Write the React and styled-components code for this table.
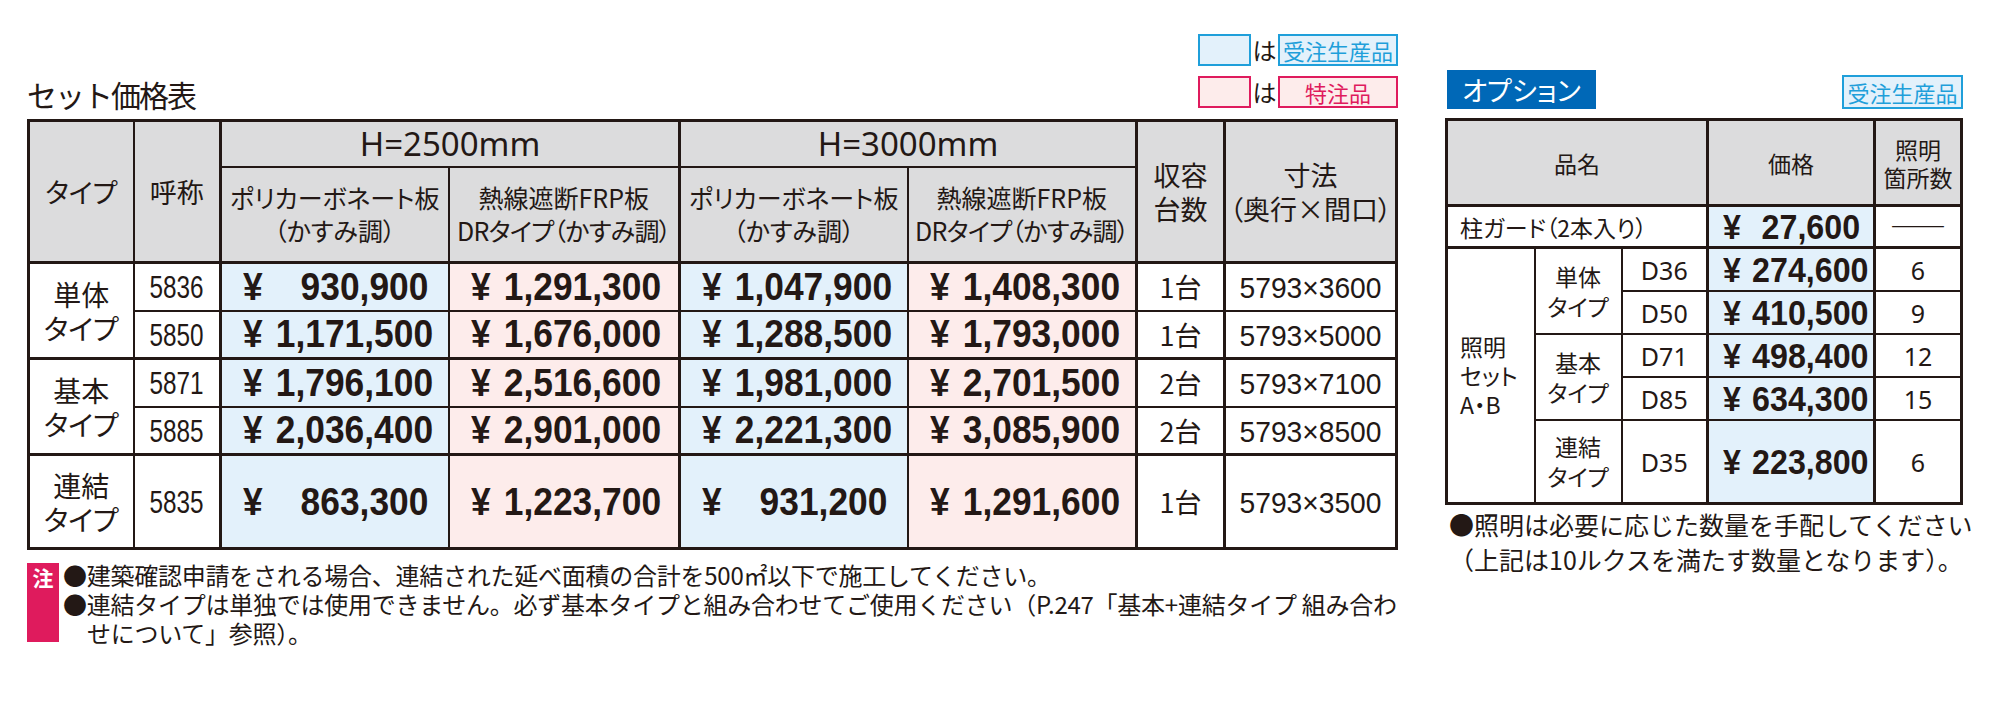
import React from 'react';
import styled, { createGlobalStyle } from 'styled-components';

const INK = '#231815';
const GRAY = '#dcdcdd';
const BLUE_BG = '#e3f1fb';
const PINK_BG = '#fdeceb';
const CYAN = '#1f9fda';
const CRIMSON = '#df1b5d';
const JP = `"Noto Sans CJK JP", "Noto Sans", sans-serif`;
const LATIN = `"Noto Sans", "Noto Sans CJK JP", sans-serif`;
const HELV = `"Liberation Sans", Arial, sans-serif`;

const toneBg = (t) => (t === 'blue' ? BLUE_BG : t === 'pink' ? PINK_BG : '#fff');
const toneInk = (t) => (t === 'blue' ? CYAN : CRIMSON);

const GlobalStyle = createGlobalStyle`
  html, body { margin: 0; padding: 0; background: #fff; }
  body { font-family: ${JP}; color: ${INK}; }
`;

const Page = styled.div`
  display: flex;
  align-items: flex-start;
  gap: 47px;
  padding-left: 27px;
  width: 1998px;
  height: 701px;
  box-sizing: border-box;
  background: #fff;
  overflow: hidden;
`;

const MainColumn = styled.section`
  width: 1371px;
  flex-shrink: 0;
  padding-top: 34px;
  display: flex;
  flex-direction: column;
`;

const TopBar = styled.div`
  display: flex;
  justify-content: space-between;
  align-items: flex-end;
  margin-bottom: 11px;
`;

const Title = styled.h2`
  margin: 0 0 -3px 0;
  font-family: ${JP};
  font-weight: 400;
  font-size: 30px;
  line-height: 34px;
  letter-spacing: -2px;
`;

const Legend = styled.div`
  display: flex;
  flex-direction: column;
  gap: 10px;
`;

const LegendRow = styled.div`
  display: flex;
  align-items: center;
  height: 32px;
`;

const Swatch = styled.span`
  width: 53px;
  height: 32px;
  box-sizing: border-box;
  border: 2.5px solid ${(p) => toneInk(p.$tone)};
  background: ${(p) => toneBg(p.$tone)};
`;

const Ha = styled.span`
  width: 27px;
  text-align: center;
  font-family: ${JP};
  font-size: 24px;
  line-height: 32px;
`;

const Tag = styled.span`
  width: ${(p) => p.$w}px;
  height: ${(p) => p.$h}px;
  box-sizing: border-box;
  border: 2.5px solid ${(p) => toneInk(p.$tone)};
  background: ${(p) => toneBg(p.$tone)};
  color: ${(p) => toneInk(p.$tone)};
  display: flex;
  align-items: center;
  justify-content: center;
  font-family: ${JP};
  font-size: 22px;
  line-height: 1;
`;

const Table = styled.table`
  border-collapse: collapse;
  table-layout: fixed;
  width: ${(p) => p.$w}px;
  border: 3px solid ${INK};
`;

const Row = styled.tr`
  height: ${(p) => p.$h}px;
`;

const Cell = styled.td`
  border: 2px solid ${INK};
  border-right-width: ${(p) => (p.$thickR ? 3 : 2)}px;
  border-bottom-width: ${(p) => (p.$thickB ? 3 : 2)}px;
  background: ${(p) => (p.$head ? GRAY : toneBg(p.$tone))};
  padding: ${(p) => (p.$align === 'left' ? '0 0 0 12px' : '0')};
  text-align: ${(p) => p.$align || 'center'};
  vertical-align: middle;
  font-family: ${JP};
  font-weight: 400;
  font-size: ${(p) => p.$size || 26}px;
  line-height: ${(p) => p.$lh || 33}px;
  font-feature-settings: ${(p) => (p.$palt === false ? 'normal' : '"palt"')};
  white-space: nowrap;
`;

const Tight = styled.span`
  letter-spacing: ${(p) => p.$ls}px;
`;

const LatinText = styled.span`
  font-family: ${LATIN};
  font-size: ${(p) => p.$size}px;
  font-weight: 400;
`;

const Condensed = styled.span`
  display: inline-block;
  font-family: ${HELV};
  font-size: ${(p) => p.$size}px;
  font-weight: ${(p) => (p.$bold ? 700 : 400)};
  transform: scaleX(${(p) => p.$sx});
  transform-origin: ${(p) => p.$origin || 'center'} center;
  line-height: 1;
`;

const PriceBox = styled.div`
  display: flex;
  justify-content: space-between;
  align-items: center;
  padding: 0 ${(p) => p.$pr}px 0 ${(p) => p.$pl}px;
`;

const DashText = styled.span`
  font-family: ${JP};
  font-size: 28px;
  font-weight: 700;
  color: ${INK};
  letter-spacing: 0;
`;

const Notes = styled.div`
  display: flex;
  gap: 4px;
  margin-top: 13px;
`;

const NoteBadge = styled.div`
  width: 32px;
  height: 79px;
  flex-shrink: 0;
  box-sizing: border-box;
  padding-top: 4px;
  background: ${CRIMSON};
  color: #fff;
  display: flex;
  justify-content: center;
  font-family: ${JP};
  font-weight: 700;
  font-size: 21px;
  line-height: 1;
`;

const NoteList = styled.ul`
  list-style: none;
  margin: -3px 0 0;
  padding: 0;
  font-family: ${JP};
  font-size: ${(p) => p.$size}px;
  line-height: ${(p) => p.$lh}px;
  letter-spacing: ${(p) => p.$ls || 0}px;
`;

const NoteItem = styled.li`
  padding-left: 1em;
  text-indent: -1em;
  white-space: nowrap;
`;

const SideColumn = styled.section`
  width: 518px;
  flex-shrink: 0;
  padding-top: 70px;
  display: flex;
  flex-direction: column;
`;

const SideHeader = styled.div`
  display: flex;
  justify-content: space-between;
  align-items: flex-end;
  margin: 0 0 9px 2px;
`;

const SectionBadge = styled.div`
  width: 149px;
  height: 39px;
  background: #0068b7;
  color: #fff;
  display: flex;
  align-items: center;
  justify-content: center;
  font-family: ${JP};
  font-size: 27px;
  line-height: 1;
  font-feature-settings: "palt";
`;

const SideNotes = styled(NoteList)`
  margin: 2px 0 0 4px;
`;

function Price({ value, size, sx, pl, pr }) {
  return (
    <PriceBox $pl={pl} $pr={pr}>
      <Condensed $bold $size={size} $sx={sx} $origin="left">¥</Condensed>
      <Condensed $bold $size={size} $sx={sx} $origin="right">{value}</Condensed>
    </PriceBox>
  );
}

const mainRows = [
  { group: ['単体', 'タイプ'], span: 2, code: '5836', prices: ['930,900', '1,291,300', '1,047,900', '1,408,300'], units: '1台', size: '5793×3600', h: 48 },
  { code: '5850', prices: ['1,171,500', '1,676,000', '1,288,500', '1,793,000'], units: '1台', size: '5793×5000', h: 48, end: true },
  { group: ['基本', 'タイプ'], span: 2, code: '5871', prices: ['1,796,100', '2,516,600', '1,981,000', '2,701,500'], units: '2台', size: '5793×7100', h: 48 },
  { code: '5885', prices: ['2,036,400', '2,901,000', '2,221,300', '3,085,900'], units: '2台', size: '5793×8500', h: 48, end: true },
  { group: ['連結', 'タイプ'], span: 1, code: '5835', prices: ['863,300', '1,223,700', '931,200', '1,291,600'], units: '1台', size: '5793×3500', h: 94, end: true },
];

const tones = ['blue', 'pink', 'blue', 'pink'];

function PanelHead({ thickR }) {
  return (
    <>
      <Cell $head $thickB $size={25}>ポリカーボネート板<br />（かすみ調）</Cell>
      <Cell $head $thickR={thickR} $thickB $size={25}>
        熱線遮断FRP板<br /><Tight $ls={-0.7}>DRタイプ（かすみ調）</Tight>
      </Cell>
    </>
  );
}

function PriceTable() {
  return (
    <Table $w={1371}>
      <colgroup>
        {[105, 87, 228, 231, 228, 229, 88, 172].map((w, i) => (
          <col key={i} style={{ width: w }} />
        ))}
      </colgroup>
      <tbody>
        <Row $h={46}>
          <Cell $head rowSpan={2} $thickB $size={27}>タイプ</Cell>
          <Cell $head rowSpan={2} $thickR $thickB $size={27}>呼称</Cell>
          <Cell $head colSpan={2} $thickR><LatinText $size={33}>H=2500mm</LatinText></Cell>
          <Cell $head colSpan={2} $thickR><LatinText $size={33}>H=3000mm</LatinText></Cell>
          <Cell $head rowSpan={2} $thickR $thickB $size={27} $lh={34}>収容<br />台数</Cell>
          <Cell $head rowSpan={2} $thickB $size={27} $lh={34}>寸法<br />（奥行×間口）</Cell>
        </Row>
        <Row $h={96}>
          <PanelHead thickR />
          <PanelHead thickR />
        </Row>
        {mainRows.map((r) => (
          <Row key={r.code} $h={r.h}>
            {r.group && (
              <Cell rowSpan={r.span} $thickB $size={28} $lh={34}>
                {r.group[0]}<br />{r.group[1]}
              </Cell>
            )}
            <Cell $thickR $thickB={r.end}>
              <Condensed $size={32} $sx={0.76}>{r.code}</Condensed>
            </Cell>
            {r.prices.map((p, i) => (
              <Cell key={i} $tone={tones[i]} $thickR={i % 2 === 1} $thickB={r.end}>
                <Price value={p} size={38} sx={0.93} pl={21} pr={19} />
              </Cell>
            ))}
            <Cell $thickR $thickB={r.end} $size={27}>{r.units}</Cell>
            <Cell $thickB={r.end}>
              <Condensed $size={30} $sx={0.94}>{r.size}</Condensed>
            </Cell>
          </Row>
        ))}
      </tbody>
    </Table>
  );
}

const lightRows = [
  { group: ['単体', 'タイプ'], span: 2, code: 'D36', price: '274,600', count: '6', h: 43 },
  { code: 'D50', price: '410,500', count: '9', h: 43 },
  { group: ['基本', 'タイプ'], span: 2, code: 'D71', price: '498,400', count: '12', h: 43 },
  { code: 'D85', price: '634,300', count: '15', h: 43 },
  { group: ['連結', 'タイプ'], span: 1, code: 'D35', price: '223,800', count: '6', h: 84 },
];

function OptionTable() {
  return (
    <Table $w={518}>
      <colgroup>
        {[88, 87, 86, 167, 87].map((w, i) => (
          <col key={i} style={{ width: w }} />
        ))}
      </colgroup>
      <tbody>
        <Row $h={86}>
          <Cell $head colSpan={3} $thickR $thickB $size={23} $lh={28}>品名</Cell>
          <Cell $head $thickR $thickB $size={23} $lh={28}>価格</Cell>
          <Cell $head $thickB $size={23} $lh={28}>照明<br />箇所数</Cell>
        </Row>
        <Row $h={42}>
          <Cell colSpan={3} $align="left" $thickR $thickB $size={23} $lh={28}>柱ガード（2本入り）</Cell>
          <Cell $tone="blue" $thickR $thickB>
            <Price value="27,600" size={35} sx={0.92} pl={14} pr={13} />
          </Cell>
          <Cell $thickB $palt={false} $lh={28}><DashText>――</DashText></Cell>
        </Row>
        {lightRows.map((r, idx) => (
          <Row key={r.code} $h={r.h}>
            {idx === 0 && (
              <Cell rowSpan={5} $align="left" $size={23} $lh={29}>
                照明<br />セット<br />A・B
              </Cell>
            )}
            {r.group && (
              <Cell rowSpan={r.span} $size={23} $lh={30}>
                {r.group[0]}<br />{r.group[1]}
              </Cell>
            )}
            <Cell $thickR><LatinText $size={25}>{r.code}</LatinText></Cell>
            <Cell $tone="blue" $thickR>
              <Price value={r.price} size={35} sx={0.92} pl={14} pr={13} />
            </Cell>
            <Cell><LatinText $size={25}>{r.count}</LatinText></Cell>
          </Row>
        ))}
      </tbody>
    </Table>
  );
}

export default function App() {
  return (
    <>
      <GlobalStyle />
      <Page>
        <MainColumn>
          <TopBar>
            <Title>セット価格表</Title>
            <Legend>
              <LegendRow>
                <Swatch $tone="blue" />
                <Ha>は</Ha>
                <Tag $tone="blue" $w={120} $h={32}>受注生産品</Tag>
              </LegendRow>
              <LegendRow>
                <Swatch $tone="pink" />
                <Ha>は</Ha>
                <Tag $tone="pink" $w={120} $h={32}>特注品</Tag>
              </LegendRow>
            </Legend>
          </TopBar>
          <PriceTable />
          <Notes>
            <NoteBadge>注</NoteBadge>
            <NoteList $size={24} $lh={29} $ls={-0.25}>
              <NoteItem>●建築確認申請をされる場合、連結された延べ面積の合計を500㎡以下で施工してください。</NoteItem>
              <NoteItem>
                ●連結タイプは単独では使用できません。必ず基本タイプと組み合わせてご使用ください（P.247「基本+連結タイプ 組み合わ
                <br />
                せについて」参照）。
              </NoteItem>
            </NoteList>
          </Notes>
        </MainColumn>
        <SideColumn>
          <SideHeader>
            <SectionBadge>オプション</SectionBadge>
            <Tag $tone="blue" $w={121} $h={34}>受注生産品</Tag>
          </SideHeader>
          <OptionTable />
          <SideNotes $size={25} $lh={35}>
            <NoteItem>●照明は必要に応じた数量を手配してください</NoteItem>
            <NoteItem>（上記は10ルクスを満たす数量となります）。</NoteItem>
          </SideNotes>
        </SideColumn>
      </Page>
    </>
  );
}
